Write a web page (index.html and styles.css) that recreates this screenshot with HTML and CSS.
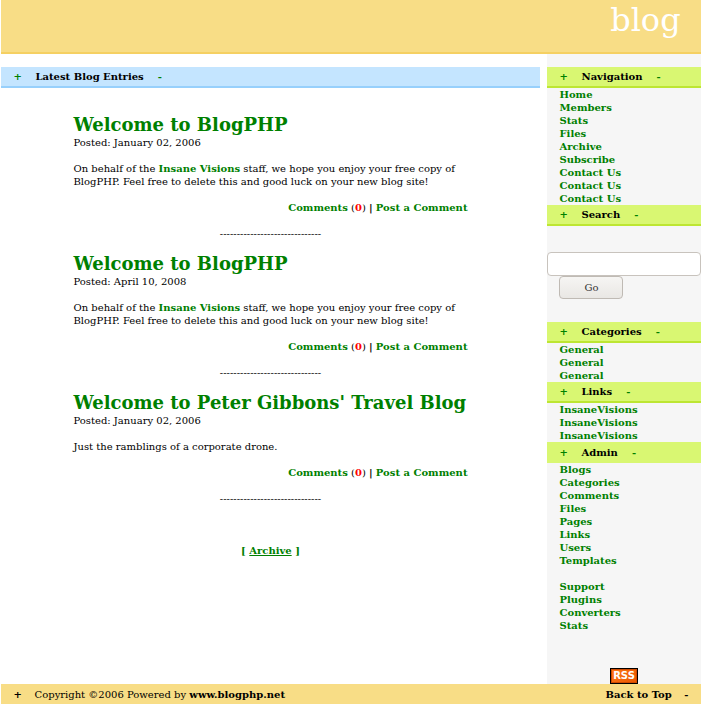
FILE: index.html
```html
<!DOCTYPE html>
<html lang="en">
<head>
<meta charset="utf-8">
<title>blog</title>
<link rel="stylesheet" href="styles.css">
</head>
<body>
<div class="page">
  <header class="header">blog</header>
  <div class="columns">
    <main class="main">
      <h2 class="bar bar-blue"><a>+</a><span class="name">Latest Blog Entries</span><a>-</a></h2>
      <div class="entries">
        <article class="entry">
          <h1>Welcome to BlogPHP</h1>
          <p class="posted">Posted: January 02, 2006</p>
          <p class="text">On behalf of the <a>Insane Visions</a> staff, we hope you enjoy your free copy of BlogPHP. Feel free to delete this and good luck on your new blog site!</p>
          <p class="comments"><a>Comments</a> (<b class="count">0</b>) <b>|</b> <a>Post a Comment</a></p>
          <p class="rule">------------------------------</p>
        </article>
        <article class="entry">
          <h1>Welcome to BlogPHP</h1>
          <p class="posted">Posted: April 10, 2008</p>
          <p class="text">On behalf of the <a>Insane Visions</a> staff, we hope you enjoy your free copy of BlogPHP. Feel free to delete this and good luck on your new blog site!</p>
          <p class="comments"><a>Comments</a> (<b class="count">0</b>) <b>|</b> <a>Post a Comment</a></p>
          <p class="rule">------------------------------</p>
        </article>
        <article class="entry">
          <h1>Welcome to Peter Gibbons' Travel Blog</h1>
          <p class="posted">Posted: January 02, 2006</p>
          <p class="text">Just the ramblings of a corporate drone.</p>
          <p class="comments"><a>Comments</a> (<b class="count">0</b>) <b>|</b> <a>Post a Comment</a></p>
          <p class="rule">------------------------------</p>
        </article>
        <p class="archive"><a>[ <u>Archive</u> ]</a></p>
      </div>
    </main>
    <aside class="side">
      <h2 class="bar"><a>+</a><span class="name">Navigation</span><a>-</a></h2>
      <ul><li>Home</li><li>Members</li><li>Stats</li><li>Files</li><li>Archive</li><li>Subscribe</li><li>Contact Us</li><li>Contact Us</li><li>Contact Us</li></ul>
      <h2 class="bar"><a>+</a><span class="name">Search</span><a>-</a></h2>
      <form class="search"><input type="text" aria-label="Search"><button type="button">Go</button></form>
      <h2 class="bar"><a>+</a><span class="name">Categories</span><a>-</a></h2>
      <ul><li>General</li><li>General</li><li>General</li></ul>
      <h2 class="bar"><a>+</a><span class="name">Links</span><a>-</a></h2>
      <ul><li>InsaneVisions</li><li>InsaneVisions</li><li>InsaneVisions</li></ul>
      <h2 class="bar bar-plain"><a>+</a><span class="name">Admin</span><a>-</a></h2>
      <ul><li>Blogs</li><li>Categories</li><li>Comments</li><li>Files</li><li>Pages</li><li>Links</li><li>Users</li><li>Templates</li></ul>
      <ul class="extra"><li>Support</li><li>Plugins</li><li>Converters</li><li>Stats</li></ul>
      <div class="rss"><span>RSS</span></div>
    </aside>
  </div>
  <footer class="footer"><b class="plus">+</b><span>Copyright ©2006 Powered by <b>www.blogphp.net</b></span><b class="top">Back to Top</b><b>-</b></footer>
</div>
</body>
</html>
```
FILE: styles.css
```css
* { box-sizing: border-box; }
body {
  margin: 0;
  background: #fff;
  color: #000;
  font: 10px/13px "DejaVu Serif", serif;
  overflow: hidden;
}
h1, h2, p, ul { margin: 0; padding: 0; }
ul { list-style: none; }
a { color: #008000; font-weight: bold; }
.page { margin-left: 1px; height: 704px; display: flex; flex-direction: column; }
.header {
  height: 54px;
  padding: 0 20.4px 0 0;
  background: #f8dd86;
  border-bottom: 2px solid #f5d062;
  color: #fff;
  font-size: 32px;
  line-height: 40px;
  text-align: right;
}
.columns { flex: 1; display: flex; justify-content: space-between; }
.main { width: 539px; padding-top: 13px; }
.side { width: 154px; padding-top: 13px; background: #f6f6f6; display: flex; flex-direction: column; }
.bar {
  height: 21px;
  padding-left: 12.5px;
  display: flex;
  background: #d9f772;
  border-bottom: 2px solid #bde632;
  font-size: 10px;
  line-height: 19px;
}
.bar .name { margin: 0 14px 0 13.6px; }
.bar-blue { background: #c4e5ff; border-color: #97d0fc; }
.bar-plain { border-color: #d9f772; line-height: 21px; }
.entries { width: 394px; margin: 26px 0 0 72.5px; }
.entry { margin-bottom: 13px; }
.entry h1 { color: #008000; font-size: 18px; line-height: 22px; white-space: nowrap; }
.text, .comments, .rule { margin-top: 13px; }
.comments { text-align: right; }
.count { color: #f00; }
.rule, .archive { text-align: center; }
.archive { margin-top: 39px; }
.side li { padding-left: 12.5px; color: #008000; font-weight: bold; }
.search { height: 96px; padding-top: 26px; display: flex; flex-direction: column; align-items: flex-start; }
.search input { width: 154px; height: 24px; border: 1px solid #c8c3bd; border-radius: 4px; background: #fff; }
.search button {
  width: 64px;
  height: 23px;
  margin-left: 12px;
  padding: 0 0 0 1px;
  border: 1px solid #bfbab4;
  border-radius: 4px;
  background: linear-gradient(#f6f5f3, #e9e7e4);
  color: #333;
  font: 10px/20px "DejaVu Serif", serif;
}
.extra { margin-top: 13px; }
.rss { margin-top: auto; display: flex; justify-content: center; }
.rss span {
  width: 28px;
  height: 16px;
  border: 1px solid #000;
  background: linear-gradient(135deg, #ff7a18, #e85500);
  box-shadow: inset 0 0 0 1px #d04a00;
  color: #fff;
  font: bold 10px/14px "DejaVu Sans", sans-serif;
  text-align: center;
}
.footer { height: 20px; padding: 0 12.6px; display: flex; background: #f8dd86; line-height: 21px; }
.footer .plus { margin-right: 12.6px; }
.footer .top { margin: 0 12.6px 0 auto; }
```
